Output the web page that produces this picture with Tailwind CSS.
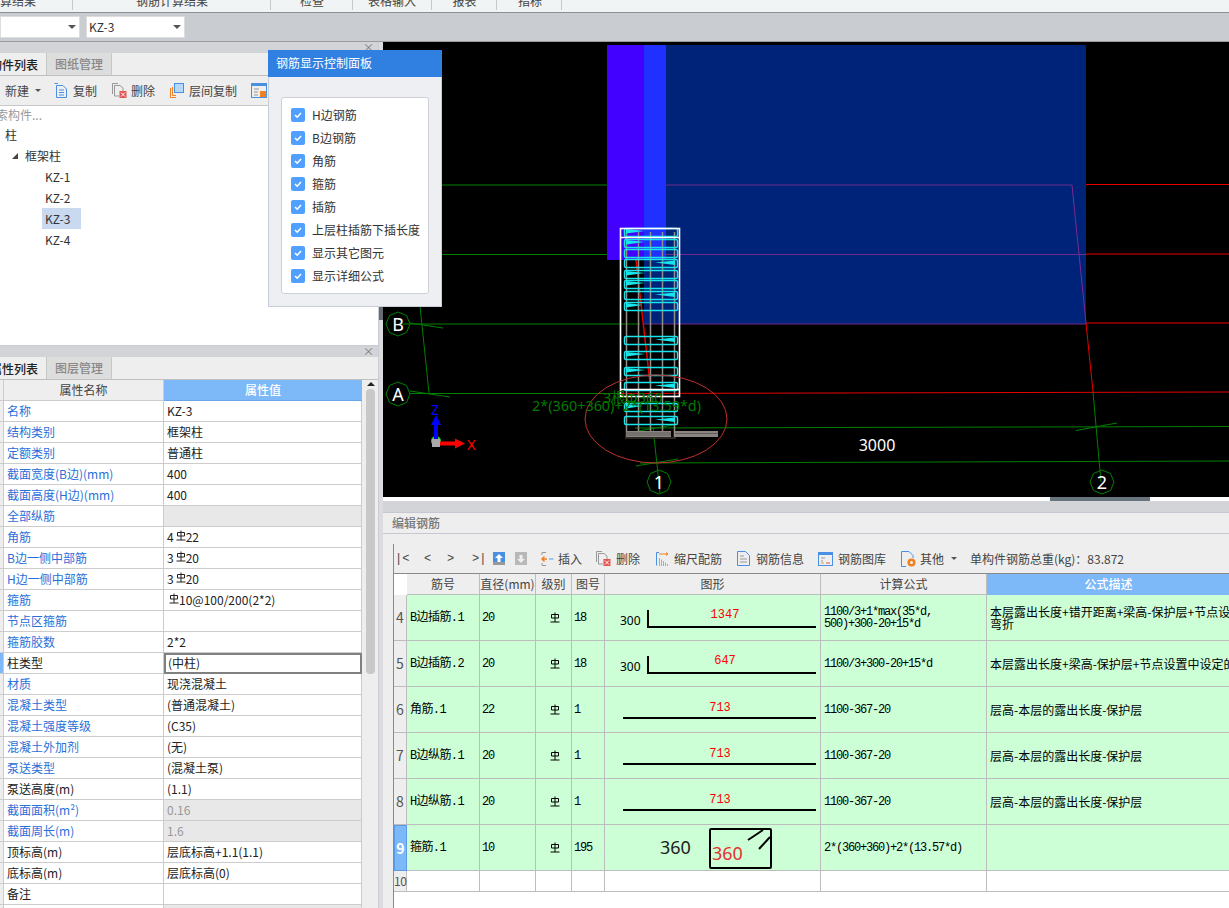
<!DOCTYPE html>
<html lang="zh-CN">
<head>
  <meta charset="UTF-8" />
  <script src="https://cdn.jsdelivr.net/npm/@tailwindcss/browser@4"></script>
  <title>钢筋显示控制面板</title>
</head>
<body class="relative w-[1229px] h-[908px] overflow-hidden bg-[#eeeeee] text-[12px] text-[#333] font-['Noto_Sans_CJK_SC','Noto_Sans',sans-serif]">
  <svg class="absolute w-0 h-0">
    <symbol id="bar" viewBox="0 0 10 11"><path d="M1.5 6V2.5H8.5V6H1.5M5 0.5V10M0.5 10H9.5" fill="none" stroke="currentColor" stroke-width="1"/></symbol>
  </svg>

  <!-- top tabs (cut off by the crop) -->
  <div class="h-[13px] overflow-hidden flex items-end bg-[#f1f4f4] border-b border-[#8f8f8f] text-[#444]">
    <div class="relative -top-[2px] w-[73px] h-[18px] leading-[18px] border-r border-[#c8c8c8] text-right pr-[38px] whitespace-nowrap">算结果</div>
    <div class="relative -top-[2px] w-[198px] h-[18px] leading-[18px] border-r border-[#c8c8c8] text-center whitespace-nowrap pl-[1px]">钢筋计算结果</div>
    <div class="relative -top-[2px] w-[82px] h-[18px] leading-[18px] border-r border-[#c8c8c8] text-center pl-[1px]">检查</div>
    <div class="relative -top-[2px] w-[79px] h-[18px] leading-[18px] border-r border-[#c8c8c8] text-center">表格输入</div>
    <div class="relative -top-[2px] w-[65px] h-[18px] leading-[18px] border-r border-[#c8c8c8] text-center pl-[1px]">报表</div>
    <div class="relative -top-[2px] w-[65px] h-[18px] leading-[18px] border-r border-[#c8c8c8] text-center pl-[2px]">指标</div>
  </div>

  <!-- selector bar -->
  <div class="h-[29px] flex items-center gap-[6px] bg-[#c9ccd0] border-b border-[#9a9a9a]">
    <div class="w-[80px] h-[22px] bg-white border border-[#ddd] flex items-center justify-end pr-[3px]"><i class="w-0 h-0 border-x-[4px] border-x-transparent border-t-[4px] border-t-[#555]"></i></div>
    <div class="w-[99px] h-[22px] bg-white border border-[#ddd] flex items-center justify-between pl-[2px] pr-[3px] text-[#333]">KZ-3<i class="w-0 h-0 border-x-[4px] border-x-transparent border-t-[4px] border-t-[#555]"></i></div>
  </div>

  <div class="flex h-[866px]">
    <!-- left column -->
    <div class="w-[379px] flex flex-col border-r border-[#c8ccd4]">
      <!-- component list -->
      <div class="h-[304px] flex flex-col border-b border-[#c8ccd4] bg-white">
        <div class="h-[11px] bg-[#d2d4d8] flex items-center justify-end pr-[4px] text-[#777] text-[11px] leading-[11px]">×</div>
        <div class="h-[23px] flex bg-[#eeeeee] border-b border-[#c0c0c0]">
          <div class="w-[46px] flex justify-end pr-[8px] font-medium text-[#222] leading-[23px] overflow-hidden whitespace-nowrap"><span class="shrink-0">构件列表</span></div>
          <div class="w-[66px] bg-[#dddddd] border-x border-[#c8c8c8] text-center text-[#888] font-medium leading-[22px]">图纸管理</div>
        </div>
        <div class="h-[30px] flex items-center bg-[#eeeeee] border-b border-[#c8c8c8] text-[#444]">
          <span class="ml-[5px]">新建</span>
          <i class="ml-[6px] w-0 h-0 border-x-[3px] border-x-transparent border-t-[3px] border-t-[#555]"></i>
          <svg class="ml-[13px] w-[14px] h-[15px]" viewBox="0 0 14 15" fill="none"><path d="M0.5 0.5H4M2.5 2.5H9L12.5 6V14.5H2.5ZM5 7H10M5 9.5H10M5 12H10" stroke="#4a90e2"/></svg>
          <span class="ml-[5px]">复制</span>
          <svg class="ml-[15px] w-[15px] h-[15px]" viewBox="0 0 15 15" fill="none"><path d="M0.5 11V0.5H6M2.5 13V2.5H8L11 5V8M2.5 13H7" stroke="#999"/><rect x="7.5" y="8" width="7" height="7" fill="#e0554f"/><path d="M9 9.5L13 13.5M13 9.5L9 13.5" stroke="#fff"/></svg>
          <span class="ml-[4px]">删除</span>
          <svg class="ml-[15px] w-[14px] h-[15px]" viewBox="0 0 14 15" fill="none"><path d="M0.5 5V14.5H6M2.5 4V12.5H6" stroke="#f08020"/><rect x="4.5" y="0.5" width="9" height="9" fill="#b8d8fa" stroke="#4a90e2"/></svg>
          <span class="ml-[5px]">层间复制</span>
          <svg class="ml-[14px] w-[16px] h-[15px]" viewBox="0 0 16 15" fill="none"><rect x="0.5" y="0.5" width="15" height="14" stroke="#4a90e2"/><rect x="0" y="0" width="16" height="3" fill="#4a90e2"/><path d="M3 6H8M3 9H7M3 12H7" stroke="#999"/><rect x="9" y="8" width="6" height="6" fill="#f08020"/></svg>
        </div>
        <div class="h-[19px] bg-white border-b border-[#c8c8c8] text-[#999] leading-[17px] whitespace-nowrap overflow-hidden flex"><span class="shrink-0 -ml-[16px]">搜索构件...</span></div>
        <div class="flex-1 bg-white text-[#333] -mt-px">
          <div class="h-[21px] leading-[21px] pl-[5px]">柱</div>
          <div class="h-[21px] leading-[21px] pl-[12px] flex items-center"><i class="w-0 h-0 border-l-[6px] border-l-transparent border-b-[6px] border-b-[#444]"></i><span class="ml-[7px]">框架柱</span></div>
          <div class="h-[21px] leading-[21px] pl-[45px]">KZ-1</div>
          <div class="h-[21px] leading-[21px] pl-[45px]">KZ-2</div>
          <div class="h-[21px] leading-[21px] pl-[42px]"><span class="block w-[39px] pl-[3px] bg-[#c8d9f0]">KZ-3</span></div>
          <div class="h-[21px] leading-[21px] pl-[45px]">KZ-4</div>
        </div>
      </div>

      <!-- property list -->
      <div class="flex-1 flex flex-col overflow-hidden">
        <div class="h-[11px] bg-[#d2d4d8] flex items-center justify-end pr-[4px] text-[#777] text-[11px] leading-[11px]">×</div>
        <div class="h-[23px] flex bg-[#eeeeee] border-b border-[#c0c0c0]">
          <div class="w-[46px] flex justify-end pr-[8px] font-medium text-[#222] leading-[23px] overflow-hidden whitespace-nowrap"><span class="shrink-0">属性列表</span></div>
          <div class="w-[66px] bg-[#dddddd] border-x border-[#c8c8c8] text-center text-[#888] font-medium leading-[22px]">图层管理</div>
        </div>
        <div class="flex-1 flex overflow-hidden">
          <div id="props" class="w-[362px] bg-white"></div>
          <div class="flex-1 bg-[#eeeeee] pl-[4px] pt-[2px]">
            <i class="block mx-[1px] w-0 h-0 border-x-[4px] border-x-transparent border-b-[4px] border-b-[#222]"></i>
            <div class="mt-[3px] w-[9px] h-[285px] bg-[#c8c8c8] rounded-[4px]"></div>
          </div>
        </div>
      </div>
    </div>

    <!-- gutter between left column and 3D view -->
    <div class="w-[4px] flex flex-col bg-[#dcdcdc]">
      <div class="h-[263px]"></div>
      <div class="h-[15px] bg-[#666c72]"></div>
    </div>

    <!-- right column -->
    <div class="flex-1 flex flex-col min-w-0">
      <svg class="block w-[846px] h-[455px] bg-black" viewBox="383 42 846 455" font-family="'Noto Sans','Noto Sans CJK SC',sans-serif">
        <rect x="607" y="45" width="37" height="215" fill="#4200ff"/>
        <rect x="644" y="45" width="22" height="215" fill="#2030ff"/>
        <rect x="666" y="45" width="420" height="215" fill="#00237a"/>
        <rect x="644" y="260" width="442" height="64" fill="#00237a"/>

        <g fill="none" stroke-width="1">
          <path d="M442 185H607M442 254.500H607M400 324H640M410 393.500H622M635 428L1229 426.500M640 463L1229 461" stroke="#008000"/>
          <path d="M666 185H1072M666 254.500H1086M644 324H1086" stroke="#6e2a8c"/>
          <path d="M1086 184.500H1229M1086 254H1229M1086 323H1229M622 393.500L1229 392" stroke="#e80000"/>
          <path d="M1072 185L1086 323" stroke="#7a2a90"/>
          <path d="M1086 323L1093 392" stroke="#e80000"/>
          <path d="M1093 392L1101 482M1076 430.500L1117 423M420 306L429 393M410 323L443 328M410 391L450 397M653 427L660 493M636 466L678 459M633 432L673 425" stroke="#008000"/>
          <path d="M636 260L650 383" stroke="#e80000" stroke-width="1.500"/>
        </g>

        <!-- axis bubbles -->
        <g fill="none" stroke="#008000" stroke-width="1">
          <path d="M398 312l8.500 3.500 3.500 8.500-3.500 8.500-8.500 3.500-8.500-3.500-3.500-8.500 3.500-8.500z"/>
          <path d="M398 382l8.500 3.500 3.500 8.500-3.500 8.500-8.500 3.500-8.500-3.500-3.500-8.500 3.500-8.500z"/>
          <path d="M659 470l8.500 3.500 3.500 8.500-3.500 8.500-8.500 3.500-8.500-3.500-3.500-8.500 3.500-8.500z"/>
          <path d="M1102 470l8.500 3.500 3.500 8.500-3.500 8.500-8.500 3.500-8.500-3.500-3.500-8.500 3.500-8.500z"/>
        </g>
        <g fill="#fff" font-size="18" text-anchor="middle">
          <text x="398" y="331">B</text>
          <text x="398" y="401">A</text>
          <text x="659" y="489">1</text>
          <text x="1102" y="489">2</text>
          <text x="877" y="451" font-size="16">3000</text>
        </g>

        <!-- bars first, then the stirrups over them -->
        <path d="M626.500 232V437M638.500 232V437M650.500 232V437M662.500 232V437M674.500 232V437" stroke="#948e88" stroke-width="1.500" fill="none"/>
        <g fill="none" stroke="#18e4ec" stroke-width="1.400" transform="translate(0.500 0.500)">
          <rect x="624" y="228" width="53" height="8" rx="1.500"/>
          <rect x="624" y="239" width="53" height="8" rx="1.500"/>
          <rect x="624" y="249" width="53" height="8" rx="1.500"/>
          <rect x="624" y="259" width="53" height="8" rx="1.500"/>
          <rect x="624" y="270" width="53" height="8" rx="1.500"/>
          <rect x="624" y="280" width="53" height="8" rx="1.500"/>
          <rect x="624" y="291" width="53" height="8" rx="1.500"/>
          <rect x="624" y="302" width="53" height="8" rx="1.500"/>
          <rect x="624" y="336" width="53" height="8" rx="1.500"/>
          <rect x="624" y="351" width="53" height="8" rx="1.500"/>
          <rect x="624" y="367" width="53" height="8" rx="1.500"/>
          <rect x="624" y="382" width="53" height="8" rx="1.500"/>
          <rect x="624" y="403" width="53" height="8" rx="1.500"/>
          <rect x="624" y="416" width="53" height="8" rx="1.500"/>
        </g>
        <g fill="#18e4ec">
          <path d="M626 229L645 231L626 233.500ZM626 240L645 242L626 244.500ZM626 271L645 273L626 275.500ZM626 281L645 283L626 285.500ZM626 303L643 305L626 307.500ZM626 352L645 354L626 356.500ZM626 368L645 370L626 372.500ZM626 404L643 406L626 408.500"/>
          <path d="M675 260.500L655 262.500L675 265ZM675 292.500L655 294.500L675 297ZM675 337.500L655 339.500L675 342ZM675 383.500L655 385.500L675 388ZM675 417.500L655 419.500L675 422"/>
        </g>
        <rect x="620.500" y="228.500" width="59" height="168" fill="none" stroke="#ffffff" stroke-width="1.600"/>
        <path d="M621 237.500H679M621 389.500H679" stroke="#ffffff" stroke-width="1.600"/>
        <rect x="626" y="431" width="45" height="6" fill="#8a8580"/>
        <rect x="675" y="431" width="43" height="6" fill="#8a8580"/>
        <path d="M626 433H671M675 433.500H718M626 435H671" stroke="#444" stroke-width="0.600"/>
        <path d="M625 438H676" stroke="#3a3430" stroke-width="1.500"/>
        <ellipse cx="656" cy="419" rx="71" ry="44" fill="none" stroke="#c03030" stroke-width="1"/>
        <g fill="#007a00" font-size="14.400">
          <text x="532" y="411">2*(360+360)+2*(13.59*d)</text>
          <text x="603" y="403">3根Φ360</text>
        </g>

        <!-- axes -->
        <circle cx="436" cy="441" r="5" fill="#30d030"/>
        <path d="M436 439V424" stroke="#0000ff" stroke-width="4"/>
        <path d="M431 425L436 415L441 425Z" fill="#0000ff"/>
        <path d="M440 443.500H456" stroke="#ff0000" stroke-width="4"/>
        <path d="M455 438.500L465 443.500L455 448.500Z" fill="#ff0000"/>
        <rect x="432" y="439" width="8" height="8" fill="#aaaaaa"/>
        <text x="431" y="415" fill="#0000ff" font-size="14">Z</text>
        <text x="467" y="450" fill="#ff0000" font-size="15">X</text>
      </svg>

      <div class="relative h-[4px] bg-white"><div class="absolute left-[667px] top-0 w-[100px] h-[4px] bg-[#68747e]"></div></div>
      <div class="h-[12px] bg-[#d2d4d8] border-b border-[#c5c8d0]"></div>
      <div class="h-[21px] pl-[9px] leading-[20px] bg-[#eeeeee] border-b border-[#c5c8d0] text-[#777] font-medium">编辑钢筋</div>

      <!-- edit rebar area -->
      <div class="flex-1 ml-[10px] mt-[10px] border-l border-[#8a8a8a] flex flex-col overflow-hidden">
        <div class="h-[29px] flex items-center text-[#444] whitespace-nowrap shrink-0">
          <span class="ml-[1px] w-[24px] font-['Liberation_Mono']">|&lt;</span>
          <span class="ml-[5px] w-[23px] font-['Liberation_Mono']">&lt;</span>
          <span class="w-[25px] font-['Liberation_Mono']">&gt;</span>
          <span class="w-[21px] font-['Liberation_Mono']">&gt;|</span>
          <svg class="w-[12px] h-[13px]" viewBox="0 0 12 13"><rect width="12" height="13" fill="#4a90e2"/><rect y="10" width="12" height="3" fill="#999"/><path d="M6 2L10 6H7.500V10H4.500V6H2Z" fill="#fff"/></svg>
          <svg class="ml-[10px] w-[12px] h-[13px]" viewBox="0 0 12 13"><rect width="12" height="13" fill="#b8b8b8"/><path d="M6 11L10 7H7.500V3H4.500V7H2Z" fill="#eee"/></svg>
          <svg class="ml-[14px] w-[13px] h-[14px]" viewBox="0 0 13 14" fill="none"><path d="M5 0.500H1V3M1 11V13.500H5" stroke="#999"/><path d="M6 7H1M3.500 4.500L1 7L3.500 9.500" stroke="#f08020" stroke-width="1.500"/><path d="M8 6H12.500V8H8Z" fill="#9fc4ee"/></svg>
          <span class="ml-[4px] w-[24px]">插入</span>
          <svg class="ml-[14px] w-[15px] h-[15px]" viewBox="0 0 15 15" fill="none"><path d="M0.500 11V0.500H6M2.500 13V2.500H8L11 5V8M2.500 13H7" stroke="#999"/><rect x="7.500" y="8" width="7" height="7" fill="#e0554f"/><path d="M9 9.500L13 13.500M13 9.500L9 13.500" stroke="#fff"/></svg>
          <span class="ml-[5px] w-[24px]">删除</span>
          <svg class="ml-[16px] w-[13px] h-[14px]" viewBox="0 0 13 14" fill="none"><path d="M3 0.500H0.500V13.500" stroke="#4a90e2"/><path d="M3 2H12M10 0.500L12 2L10 3.500" stroke="#f08020"/><path d="M3.500 14V6M5.500 14V7.500M7.500 14V9M9.500 14V10.500M11.500 14V12" stroke="#aaa"/></svg>
          <span class="ml-[5px] w-[48px]">缩尺配筋</span>
          <svg class="ml-[15px] w-[13px] h-[15px]" viewBox="0 0 13 15" fill="none"><path d="M0.500 0.500H8.500L12.500 4.500V14.500H0.500Z" stroke="#4a90e2"/><path d="M3 5H7M3 8H10M3 11H10" stroke="#999"/></svg>
          <span class="ml-[6px] w-[48px]">钢筋信息</span>
          <svg class="ml-[14px] w-[15px] h-[14px]" viewBox="0 0 15 14" fill="none"><rect x="0.500" y="0.500" width="14" height="13" stroke="#4a90e2"/><rect width="15" height="3" fill="#4a90e2"/><path d="M3 6H7M3 9H5" stroke="#999"/><path d="M3 11H6" stroke="#e0a040"/><path d="M8 11H12" stroke="#e0554f"/></svg>
          <span class="ml-[5px] w-[48px]">钢筋图库</span>
          <svg class="ml-[15px] w-[15px] h-[16px]" viewBox="0 0 15 16" fill="none"><path d="M5 15.500H0.500V0.500H8L12 4.500V7" stroke="#4a90e2"/><circle cx="10.500" cy="11.500" r="2.800" stroke="#f08020" stroke-width="2.500"/></svg>
          <span class="ml-[4px] w-[24px]">其他</span>
          <i class="ml-[7px] w-0 h-0 border-x-[3px] border-x-transparent border-t-[3px] border-t-[#555]"></i>
          <span class="ml-[13px]">单构件钢筋总重(kg)：83.872</span>
        </div>
        <div id="rebar" class="border-t border-[#8a8a8a] bg-white flex-1"></div>
      </div>
    </div>
  </div>

  <!-- floating control panel -->
  <div class="absolute left-[268px] top-[50px] w-[174px] h-[257px] bg-[#eeeff2] border border-[#c8ccd8] border-t-0">
    <div class="-mx-px h-[27px] bg-[#2f80e0] text-white pl-[8px] leading-[26px]">钢筋显示控制面板</div>
    <div id="checks" class="mx-[12px] mt-[20px] h-[197px] bg-white border border-[#cdd0d6] rounded-[3px] pt-[5px] pl-[9px] text-[#333]"></div>
  </div>

  <script>
    const bar = `<svg class="inline-block ml-[2px] w-[10px] h-[11px] align-[1px]"><use href="#bar"/></svg>`

    // property rows: name, value, name is blue, value cell state
    const props = [
      ['名称', 'KZ-3', 1],
      ['结构类别', '框架柱', 1],
      ['定额类别', '普通柱', 1],
      ['截面宽度(B边)(mm)', '400', 1],
      ['截面高度(H边)(mm)', '400', 1],
      ['全部纵筋', '', 1, 'off'],
      ['角筋', '4' + bar + '22', 1],
      ['B边一侧中部筋', '3' + bar + '20', 1],
      ['H边一侧中部筋', '3' + bar + '20', 1],
      ['箍筋', bar + '10@100/200(2*2)', 1],
      ['节点区箍筋', '', 1],
      ['箍筋胶数', '2*2', 1],
      ['柱类型', '(中柱)', 0, 'sel'],
      ['材质', '现浇混凝土', 1],
      ['混凝土类型', '(普通混凝土)', 1],
      ['混凝土强度等级', '(C35)', 1],
      ['混凝土外加剂', '(无)', 1],
      ['泵送类型', '(混凝土泵)', 1],
      ['泵送高度(m)', '(1.1)', 0],
      ['截面面积(m²)', '0.16', 1, 'dis'],
      ['截面周长(m)', '1.6', 1, 'dis'],
      ['顶标高(m)', '层底标高+1.1(1.1)', 0],
      ['底标高(m)', '层底标高(0)', 0],
      ['备注', '', 0],
      ['', '', 0, 'off']
    ]
    let html = `<div class="grid grid-cols-[4px_160px_198px] h-[21px] leading-[20px]">
      <div class="bg-[#eeeeee] border-r border-b border-[#cccccc]"></div>
      <div class="bg-[#eeeeee] border-r border-b border-[#cccccc] text-center text-[#444]">属性名称</div>
      <div class="bg-[#7db8f8] border-b border-[#6aa4e8] text-center text-white font-medium">属性值</div></div>`
    for (const [name, value, blue, state] of props) {
      let valueCls = 'pl-[3px] text-[#222] border-r border-b border-[#cccccc]'
      if (state === 'off') valueCls = 'pl-[3px] bg-[#e8e8e8] border-r border-b border-[#cccccc]'
      if (state === 'dis') valueCls = 'pl-[3px] bg-[#e8e8e8] text-[#999] border-r border-b border-[#cccccc]'
      if (state === 'sel') valueCls = 'pl-[2px] text-[#222] border-2 border-[#808080] leading-[16px]'
      html += `<div class="grid grid-cols-[4px_160px_198px] h-[21px] leading-[20px] whitespace-nowrap">
        <div class="border-r border-b border-[#cccccc] ${state === 'sel' ? 'bg-[#7db8f8]' : 'bg-[#eeeeee]'}"></div>
        <div class="pl-[3px] border-r border-b border-[#cccccc] ${blue ? 'text-[#2a6fd8]' : 'text-[#222]'}">${name}</div>
        <div class="${valueCls}">${value}</div></div>`
    }
    document.getElementById('props').innerHTML = html

    const checks = ['H边钢筋', 'B边钢筋', '角筋', '箍筋', '插筋', '上层柱插筋下插长度', '显示其它图元', '显示详细公式']
    document.getElementById('checks').innerHTML = checks.map(t => `<div class="h-[23px] flex items-center">
      <span class="w-[14px] h-[14px] rounded-[2px] bg-[#4fa0ff] flex items-center justify-center"><svg class="w-[10px] h-[10px]" viewBox="0 0 10 10" fill="none"><path d="M2 5L4.200 7.200L8 3" stroke="#fff" stroke-width="1.600"/></svg></span>
      <span class="ml-[7px] whitespace-nowrap">${t}</span></div>`).join('')

    // shape cell drawings
    const hook = (n, x) => `<svg class="block w-[215px] h-[45px]" font-family="Liberation Mono"><text x="15" y="30" font-size="12" font-family="Noto Sans">300</text><text x="${x}" y="23" font-size="12" fill="#ff0000" text-anchor="middle">${n}</text><path d="M43 15V33M42 32H211" stroke="#000" stroke-width="2" fill="none"/></svg>`
    const line = `<svg class="block w-[215px] h-[45px]" font-family="Liberation Mono"><text x="115" y="24" font-size="12" fill="#ff0000" text-anchor="middle">713</text><path d="M18 31H211" stroke="#000" stroke-width="2"/></svg>`
    const hoop = `<svg class="block w-[215px] h-[45px]" font-family="Noto Sans"><text x="55" y="29" font-size="18" fill="#222">360</text><rect x="105" y="4" width="61" height="39" rx="1" fill="none" stroke="#000" stroke-width="2"/><text x="107" y="35" font-size="18" fill="#e83030">360</text><path d="M143 15L158 5M154 24L165 12" stroke="#000" stroke-width="2"/></svg>`

    const rows = [
      ['4', 'B边插筋.1', '20', '18', hook('1347', 120), '1100/3+1*max(35*d,<br>500)+300-20+15*d', '本层露出长度+错开距离+梁高-保护层+节点设置中设定的<br>弯折'],
      ['5', 'B边插筋.2', '20', '18', hook('647', 120), '1100/3+300-20+15*d', '本层露出长度+梁高-保护层+节点设置中设定的弯折'],
      ['6', '角筋.1', '22', '1', line, '1100-367-20', '层高-本层的露出长度-保护层'],
      ['7', 'B边纵筋.1', '20', '1', line, '1100-367-20', '层高-本层的露出长度-保护层'],
      ['8', 'H边纵筋.1', '20', '1', line, '1100-367-20', '层高-本层的露出长度-保护层'],
      ['9', '箍筋.1', '10', '195', hoop, '2*(360+360)+2*(13.57*d)', '']
    ]
    const gridCls = 'grid grid-cols-[13px_73px_56px_36px_33px_216px_166px_243px]'
    const edge = 'border-r border-b border-[#bdbdbd]'
    let rb = `<div class="${gridCls} h-[21px] leading-[20px] text-[#444]">
      <div class="bg-white"></div>` +
      ['筋号', '直径(mm)', '级别', '图号', '图形', '计算公式'].map(t => `<div class="bg-[#eeeeee] text-center whitespace-nowrap ${edge}">${t}</div>`).join('') +
      `<div class="bg-[#7db8f8] text-white font-medium text-center">公式描述</div></div>`
    for (const r of rows) {
      const active = r[0] === '9'
      rb += `<div class="${gridCls} h-[46px] bg-[#ccffd6] text-black items-stretch">
        <div class="flex items-center justify-center text-[14px] ${active ? 'bg-[#7db8f8] text-white font-bold border border-[#5a9ae8]' : 'bg-[#eeeeee] text-[#555] border-r border-b border-[#bdbdbd]'}">${r[0]}</div>
        <div class="flex items-center pl-[3px] whitespace-nowrap font-['Liberation_Mono','Noto_Sans_CJK_SC',monospace] tracking-[-0.6px] ${edge}">${r[1]}</div>
        <div class="flex items-center pl-[2px] font-['Liberation_Mono'] tracking-[-1.2px] ${edge}">${r[2]}</div>
        <div class="flex items-center justify-center ${edge}">${bar}</div>
        <div class="flex items-center pl-[2px] font-['Liberation_Mono'] tracking-[-1.2px] ${edge}">${r[3]}</div>
        <div class="${edge}">${r[4]}</div>
        <div class="flex items-center pl-[3px] font-['Liberation_Mono'] leading-[12px] tracking-[-1.2px] whitespace-nowrap ${edge}">${r[5]}</div>
        <div class="flex items-center pl-[3px] leading-[12px] whitespace-nowrap border-b border-[#bdbdbd]">${r[6]}</div></div>`
    }
    rb += `<div class="${gridCls} h-[21px] bg-white">
      <div class="bg-[#eeeeee] text-[#555] text-[12px] tracking-[-0.5px] text-center leading-[20px] border-r border-b border-[#bdbdbd]">10</div>` +
      Array(6).fill(`<div class="${edge}"></div>`).join('') +
      `<div class="border-b border-[#bdbdbd]"></div></div>`
    document.getElementById('rebar').innerHTML = rb
  </script>
</body>
</html>
